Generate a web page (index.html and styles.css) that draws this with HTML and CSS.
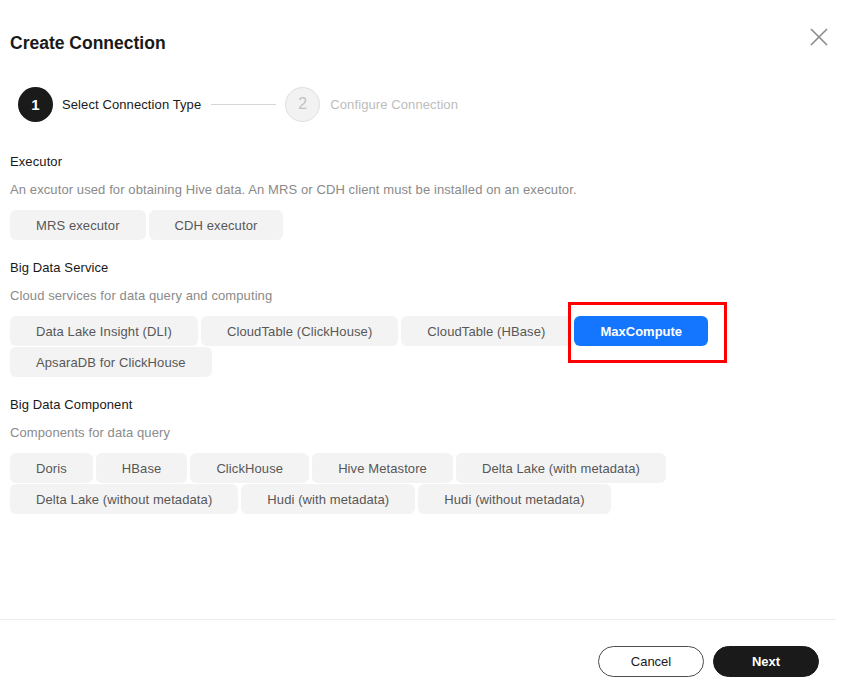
FILE: index.html
```html
<!DOCTYPE html>
<html>
<head>
<meta charset="utf-8">
<link rel="stylesheet" href="styles.css">
</head>
<body>
<div class="dialog">
  <div class="header">
    <h1 class="title">Create Connection</h1>
    <button class="close" aria-label="Close">
      <svg width="18" height="18" viewBox="0 0 18 18"><path d="M1 1L17 17M17 1L1 17" stroke="#8a8a8a" stroke-width="1.6" fill="none"/></svg>
    </button>
  </div>
  <div class="steps">
    <div class="step active"><span class="num">1</span><span class="label">Select Connection Type</span></div>
    <span class="step-line"></span>
    <div class="step todo"><span class="num">2</span><span class="label">Configure Connection</span></div>
  </div>

  <div class="sections">
  <div class="section">
    <div class="sec-title">Executor</div>
    <div class="sec-desc">An excutor used for obtaining Hive data. An MRS or CDH client must be installed on an executor.</div>
    <div class="chips">
      <span class="chip">MRS executor</span>
      <span class="chip">CDH executor</span>
    </div>
  </div>

  <div class="section">
    <div class="sec-title">Big Data Service</div>
    <div class="sec-desc">Cloud services for data query and computing</div>
    <div class="chips">
      <span class="chip">Data Lake Insight (DLI)</span>
      <span class="chip">CloudTable (ClickHouse)</span>
      <span class="chip">CloudTable (HBase)</span>
      <span class="chip selected">MaxCompute<span class="mark"></span></span>
      <span class="chip">ApsaraDB for ClickHouse</span>
    </div>
  </div>

  <div class="section">
    <div class="sec-title">Big Data Component</div>
    <div class="sec-desc">Components for data query</div>
    <div class="chips">
      <span class="chip">Doris</span>
      <span class="chip">HBase</span>
      <span class="chip">ClickHouse</span>
      <span class="chip">Hive Metastore</span>
      <span class="chip">Delta Lake (with metadata)</span>
      <span class="chip">Delta Lake (without metadata)</span>
      <span class="chip">Hudi (with metadata)</span>
      <span class="chip">Hudi (without metadata)</span>
    </div>
  </div>
  </div>

  <div class="footer">
    <button class="btn cancel">Cancel</button>
    <button class="btn next">Next</button>
  </div>
</div>
</body>
</html>
```

FILE: styles.css
```css
* { box-sizing: border-box; }
html, body { margin: 0; padding: 0; background: #fff; }
body {
  font-family: "Liberation Sans", Arial, sans-serif;
  color: #191919;
  font-size: 13px;
  letter-spacing: 0.1px;
}
.dialog {
  width: 844px;
  height: 680px;
  display: flex;
  flex-direction: column;
}
.header {
  display: flex;
  justify-content: space-between;
  align-items: flex-start;
  padding: 31px 16px 0 10px;
}
.title {
  margin: 0;
  font-size: 17.5px;
  line-height: 24px;
  font-weight: bold;
  letter-spacing: 0;
  color: #191919;
}
.close {
  border: 0;
  background: none;
  padding: 0;
  margin-top: -3px;
  width: 18px;
  height: 18px;
  cursor: pointer;
}
.close svg { display: block; }
.steps {
  display: flex;
  align-items: center;
  padding-left: 18px;
  margin-top: 32px;
  height: 34px;
}
.step { display: flex; align-items: center; }
.num {
  width: 35px;
  height: 35px;
  border-radius: 50%;
  display: flex;
  align-items: center;
  justify-content: center;
  font-size: 15px;
}
.step.active .num { background: #1a1a1a; color: #fff; font-weight: bold; }
.step.todo .num { background: #f2f2f2; border: 1px solid #dfdfdf; color: #c2c2c2; font-size: 16px; }
.label { margin-left: 9px; font-size: 13px; }
.step.active .label { color: #191919; }
.step.todo .label { color: #bdbdbd; margin-left: 10px; }
.step-line {
  width: 65px;
  height: 1px;
  background: #d6d6d6;
  margin: 0 9px 0 10px;
}
.sections { margin-top: 31px; }
.section { padding-left: 10px; }
.section + .section { margin-top: 18px; }
.sec-title { line-height: 20px; color: #191919; }
.sec-desc { line-height: 20px; color: #8a8a8a; margin-top: 8px; }
.chips {
  display: flex;
  flex-wrap: wrap;
  gap: 1px 3px;
  margin-top: 10px;
  width: 730px;
}
.chip {
  position: relative;
  display: inline-flex;
  align-items: center;
  justify-content: center;
  height: 30px;
  padding: 0 26px;
  background: #f3f3f3;
  border-radius: 6px;
  color: #575757;
  white-space: nowrap;
}
.chip.selected {
  background: #1476ff;
  color: #fff;
  font-weight: bold;
  letter-spacing: 0;
}
.mark {
  position: absolute;
  left: -6px;
  top: -14px;
  width: 159px;
  height: 61px;
  border: 3px solid #ff0000;
}
.footer {
  margin-top: auto;
  border-top: 1px solid #ececec;
  width: 836px;
  display: flex;
  justify-content: flex-end;
  gap: 9px;
  padding: 26px 17px 3px 0;
}
.btn {
  height: 31px;
  width: 106px;
  border-radius: 16px;
  font-family: "Liberation Sans", Arial, sans-serif;
  font-size: 13px;
  cursor: pointer;
}
.cancel { background: #fff; border: 1px solid #4d4d4d; color: #191919; }
.next { background: #1a1a1a; border: 1px solid #1a1a1a; color: #fff; font-weight: bold; }
```
